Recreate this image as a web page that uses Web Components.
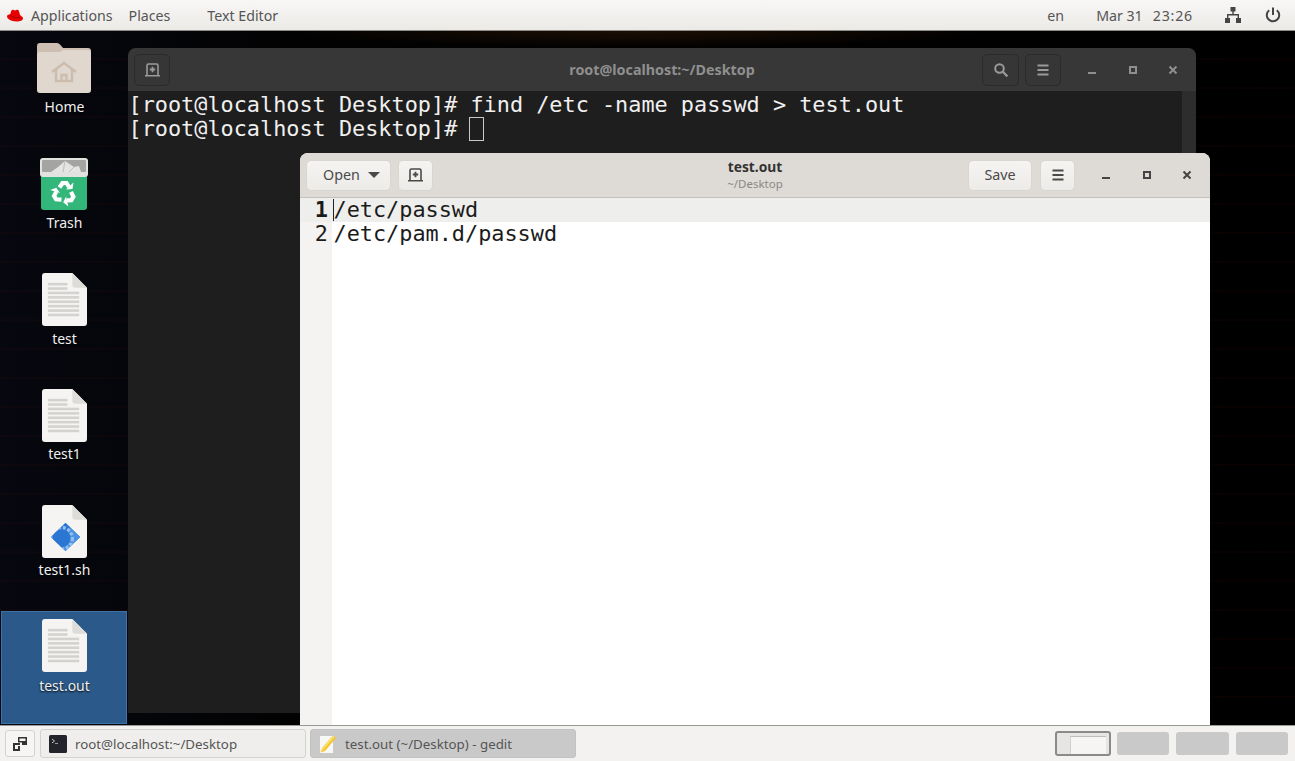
<!DOCTYPE html>
<html lang="en">
<head>
<meta charset="utf-8">
<title>Desktop</title>
<style>
  html, body { margin: 0; height: 100%; }
  body {
    width: 1295px;
    height: 761px;
    overflow: hidden;
    display: flex;
    flex-direction: column;
    font-family: "Noto Sans", "Open Sans", sans-serif;
    background: #000;
  }
</style>
</head>
<body>
<top-panel></top-panel>
<desktop-area>
  <desktop-icon kind="folder" label="Home"></desktop-icon>
  <desktop-icon kind="trash" label="Trash"></desktop-icon>
  <desktop-icon kind="text" label="test"></desktop-icon>
  <desktop-icon kind="text" label="test1"></desktop-icon>
  <desktop-icon kind="script" label="test1.sh"></desktop-icon>
  <desktop-icon kind="text" label="test.out" selected></desktop-icon>
  <terminal-window slot="windows"></terminal-window>
  <gedit-window slot="windows"></gedit-window>
</desktop-area>
<bottom-panel></bottom-panel>

<script>
const ICONS = {
  tab: `<svg width="17" height="16" viewBox="0 0 16 16" fill="none" stroke="currentColor"><path d="M2.500 13V3.500a1.500 1.500 0 0 1 1.500-1.500h8a1.500 1.500 0 0 1 1.500 1.500V13" stroke-width="1.600"/><path d="M.5 13.700h15" stroke-width="1.600"/><path d="M8 4.800v5.400M5.300 7.500h5.400" stroke-width="1.800"/></svg>`,
  menu: `<svg width="16" height="16" viewBox="0 0 16 16" fill="currentColor"><rect x="2.500" y="2.500" width="11" height="2"/><rect x="2.500" y="7" width="11" height="2"/><rect x="2.500" y="11.500" width="11" height="2"/></svg>`,
  search: `<svg width="16" height="16" viewBox="0 0 16 16" fill="none" stroke="currentColor"><circle cx="6.500" cy="6.500" r="4.300" stroke-width="2"/><path d="M9.800 9.800l4.600 4.600" stroke-width="2.200"/></svg>`,
  min: `<svg width="16" height="16" viewBox="0 0 16 16" fill="currentColor"><rect x="4" y="10" width="8" height="2"/></svg>`,
  max: `<svg width="16" height="16" viewBox="0 0 16 16" fill="none" stroke="currentColor" stroke-width="2"><rect x="5" y="5" width="6" height="6"/></svg>`,
  close: `<svg width="16" height="16" viewBox="0 0 16 16" fill="none" stroke="currentColor" stroke-width="2"><path d="M4.500 4.500l7 7M11.500 4.500l-7 7"/></svg>`
};

function svgFile(inner) {
  return `<svg width="45" height="53" viewBox="0 0 46 54">
    <path d="M3 0h28l15 15v36a3 3 0 0 1-3 3H3a3 3 0 0 1-3-3V3a3 3 0 0 1 3-3z" fill="#f5f4f2"/>
    <path d="M31 0l15 15H34a3 3 0 0 1-3-3z" fill="#dddcd8"/>
    ${inner}
  </svg>`;
}

const textLines = [10, 14.5, 19, 23.5, 28, 32.5, 37, 41.5]
  .map((y, i) => `<rect x="6" y="${y}" width="${i < 2 ? 20 : 32}" height="2.600" fill="#d3d2cf"/>`).join("");

const recycleArm = `<path d="M20.500 30.500l3-4.500h4l2.500 4" fill="none" stroke="#fff" stroke-width="4.200"/><path d="M27 32.500l6.500-.5 1-6.500z" fill="#fff"/>`;

const DESKTOP_ART = {
  folder: `<svg width="54" height="50" viewBox="0 0 54 50">
    <path d="M3 0h17a4 4 0 0 1 3 1.500L26 5h25a3 3 0 0 1 3 3v10H0V3a3 3 0 0 1 3-3z" fill="#cdbfb1"/>
    <path d="M0 12a3 3 0 0 1 3-3h20l3-2h25a3 3 0 0 1 3 3v37a3 3 0 0 1-3 3H3a3 3 0 0 1-3-3z" fill="#e0d8cf"/>
    <path d="M15 29l12-9 12 9M19 27v11h16V27M24.500 38v-6h5v6" fill="none" stroke="#cbbcae" stroke-width="2.400"/>
  </svg>`,
  trash: `<svg width="50" height="54" viewBox="0 0 50 54">
    <rect x="2" y="16" width="46" height="37" rx="3" fill="#33b679"/>
    <rect x="1" y="1" width="48" height="19" rx="3" fill="#e2e2e0"/>
    <rect x="3" y="3" width="44" height="12" rx="1" fill="#a4a4a2"/>
    <path d="M12 15l7-5 7-6 9 6 5-1 2 6z" fill="#e4e4e2"/>
    <path d="M26 4l-2 11M35 10l-5 5" stroke="#bdbdbb" stroke-width="1" fill="none"/>
    <g>${recycleArm}</g>
    <g transform="rotate(120 25 36)">${recycleArm}</g>
    <g transform="rotate(240 25 36)">${recycleArm}</g>
  </svg>`,
  text: svgFile(textLines),
  script: svgFile(`<defs><clipPath id="dia"><path d="M24 18l15 14.500L24 47 9 32.500z"/></clipPath></defs>
    <g clip-path="url(#dia)">
      <rect x="8" y="17" width="32" height="31" fill="#2a76d2"/>
      <path d="M24 18l16 15-16 15-6-6 12-22z" fill="#4b90e2"/>
      <circle cx="20" cy="34" r="11" fill="none" stroke="#93bfee" stroke-width="3.400" stroke-dasharray="3 1.800"/>
      <circle cx="20" cy="34" r="9" fill="#2a76d2"/>
    </g>`)
};

class TopPanel extends HTMLElement {
  constructor() {
    super();
    this.attachShadow({ mode: "open" }).innerHTML = `
      <style>
        :host {
          display: flex;
          align-items: center;
          flex: none;
          height: 30px;
          border-bottom: 1px solid #8e8c89;
          background: linear-gradient(#f8f7f6, #eceae7);
          color: #555;
          font-size: 14.2px;
        }
        svg { flex: none; }
        .hat { margin-left: 7px; margin-right: 8px; }
        .places { margin-left: 16px; }
        .app { margin-left: 37px; }
        .spacer { flex: 1; }
        .date { margin-left: 32px; }
        .time { margin-left: 10px; letter-spacing: .8px; }
        .net { margin-left: 32px; }
        .power { margin-left: 24px; margin-right: 14px; color: #444; }
      </style>
      <svg class="hat" width="16" height="13" viewBox="0 0 16 13">
        <path d="M10.500.8c-.9 0-1.600.6-2.500.6S6.500.8 5.500.8C4.200.8 3.800 3 3.300 5.200 1.500 5.300 0 6 0 7.500 0 9.600 4 12.500 9.500 12.500 13 12.500 16 11.300 16 9.200 16 7.700 13.300 7.200 12.700 5 12.200 2.800 11.700.8 10.500.8z" fill="#e60000"/>
        <path d="M3.300 5.500c0 1.500 4 3.500 9.700 3.200" fill="none" stroke="#8f0000" stroke-width=".7"/>
      </svg>
      <span>Applications</span>
      <span class="places">Places</span>
      <span class="app">Text Editor</span>
      <span class="spacer"></span>
      <span>en</span>
      <span class="date">Mar 31</span>
      <span class="time">23:26</span>
      <svg class="net" width="16" height="16" viewBox="0 0 16 16" fill="#444"><rect x="5.500" y="0" width="5" height="4.500"/><rect x="0" y="11" width="5" height="5"/><rect x="11" y="11" width="5" height="5"/><path d="M7.300 4h1.400v3H14v4h-1.400V8.400H3.400V11H2V7h5.300z"/></svg>
      <svg class="power" width="16" height="16" viewBox="0 0 16 16" fill="none" stroke="currentColor" stroke-width="2"><path d="M8 .5v7.500"/><path d="M4.200 3.200a6.200 6.200 0 1 0 7.600 0"/></svg>
    `;
  }
}

class DesktopArea extends HTMLElement {
  constructor() {
    super();
    this.attachShadow({ mode: "open" }).innerHTML = `
      <style>
        :host {
          display: block;
          position: relative;
          flex: 1;
          overflow: hidden;
          background:
            radial-gradient(ellipse 360px 16px at 640px 0, rgba(90,45,10,.3), transparent),
            repeating-linear-gradient(180deg, transparent 0 27px, rgba(60,10,5,.12) 27px 29px),
            linear-gradient(90deg, #07080f 0, #05060b 120px, #020202 300px, #000 100%);
        }
        .icons {
          display: grid;
          grid-auto-rows: 115.8px;
          width: 126px;
          padding-left: 1px;
        }
      </style>
      <div class="icons"><slot></slot></div>
      <slot name="windows"></slot>
    `;
  }
}

class DesktopIcon extends HTMLElement {
  constructor() {
    super();
    const kind = this.getAttribute("kind");
    const label = this.getAttribute("label");
    this.attachShadow({ mode: "open" }).innerHTML = `
      <style>
        :host {
          display: flex;
          flex-direction: column;
          align-items: center;
          box-sizing: border-box;
          padding-top: 10px;
          color: #f0f0f0;
          font-size: 14px;
          line-height: 20px;
          text-shadow: 0 1px 2px #000;
        }
        :host([selected]) {
          margin-top: 1px;
          padding-top: 8px;
          height: 113px;
          background: #2b5a8a;
          outline: 1px solid #3d71a8;
          outline-offset: -1px;
        }
        .art { height: 54px; display: flex; align-items: center; }
        .label { margin-top: 2px; padding-left: 1px; }
        :host([selected]) .label { margin-top: 3px; }
      </style>
      <div class="art">${DESKTOP_ART[kind]}</div>
      <div class="label">${label}</div>
    `;
  }
}

class HeaderButton extends HTMLElement {
  constructor() {
    super();
    this.attachShadow({ mode: "open" }).innerHTML = `
      <style>
        :host {
          display: inline-flex;
          align-items: center;
          justify-content: center;
          box-sizing: border-box;
          height: var(--btn-h, 31px);
          border-radius: 5px;
          background: var(--btn-bg);
          border: 1px solid var(--btn-border);
          color: var(--btn-fg);
          font-size: 14.3px;
        }
      </style>
      <slot></slot>
    `;
  }
}

class TerminalWindow extends HTMLElement {
  constructor() {
    super();
    this.attachShadow({ mode: "open" }).innerHTML = `
      <style>
        :host {
          position: absolute;
          left: 128px;
          top: 17px;
          width: 1068px;
          height: 665px;
          display: flex;
          flex-direction: column;
          border-radius: 8px 8px 0 0;
          overflow: hidden;
          background: #1e1e1e;
          --btn-bg: #363636;
          --btn-border: #2b2b2b;
          --btn-fg: #9a9a9a;
        }
        header {
          flex: none;
          height: 43px;
          display: grid;
          grid-template-columns: 1fr auto 1fr;
          align-items: center;
          background: #373737;
          color: #8f8f8f;
          font-size: 14.3px;
          font-weight: 700;
        }
        .start { padding-left: 6px; }
        .end { display: flex; align-items: center; justify-content: flex-end; }
        header-button { width: 36px; --btn-h: 32px; }
        .search { width: 37px; margin-right: 6px; }
        .controls { display: flex; gap: 24.5px; padding: 0 15px 0 23px; }
        .body { flex: 1; display: flex; min-height: 0; }
        pre {
          flex: 1;
          margin: 0;
          padding: 2px 0 0 .5px;
          font: 21.85px/24px "DejaVu Sans Mono", monospace;
          color: #f0f0f0;
        }
        .cursor {
          display: inline-block;
          box-sizing: border-box;
          width: 15px;
          height: 24px;
          margin-left: -1px;
          border: 1px solid #c8c8c8;
          vertical-align: top;
        }
        .scroll { flex: none; width: 14px; background: #2d2d2d; }
      </style>
      <header>
        <div class="start"><header-button>${ICONS.tab}</header-button></div>
        <span class="title">root@localhost:~/Desktop</span>
        <div class="end">
          <header-button class="search">${ICONS.search}</header-button>
          <header-button>${ICONS.menu}</header-button>
          <div class="controls">${ICONS.min}${ICONS.max}${ICONS.close}</div>
        </div>
      </header>
      <div class="body">
<pre>[root@localhost Desktop]# find /etc -name passwd &gt; test.out
[root@localhost Desktop]# <span class="cursor"></span></pre>
        <div class="scroll"></div>
      </div>
    `;
  }
}

class GeditWindow extends HTMLElement {
  constructor() {
    super();
    this.attachShadow({ mode: "open" }).innerHTML = `
      <style>
        :host {
          position: absolute;
          left: 300px;
          top: 122px;
          width: 910px;
          height: 572px;
          display: flex;
          flex-direction: column;
          border-radius: 8px 8px 0 0;
          overflow: hidden;
          background: #fff;
          --btn-bg: linear-gradient(#f5f4f2, #ecebe8);
          --btn-border: #d9d6d1;
          --btn-fg: #4a4a4a;
        }
        header {
          flex: none;
          box-sizing: border-box;
          height: 45px;
          display: grid;
          grid-template-columns: 1fr auto 1fr;
          align-items: center;
          background: #dedbd6;
          border-bottom: 1px solid #c6c2bb;
          color: #333;
        }
        .start, .end { display: flex; align-items: center; }
        .start { padding-left: 6px; }
        .end { justify-content: flex-end; }
        .open { width: 85px; gap: 8px; padding: 0 0 2px 6px; }
        .open i { width: 0; height: 0; margin-top: 2px; border: 6px solid transparent; border-top: 6px solid #4a4a4a; border-bottom: 0; }
        .newtab { width: 35px; margin-left: 7px; }
        .title { text-align: center; line-height: 17px; }
        .title b { display: block; font-size: 13.8px; color: #333; }
        .title small { display: block; font-size: 11.5px; color: #8a8884; }
        .save { width: 64px; margin-right: 8px; padding-bottom: 2px; }
        .menu { width: 35px; }
        .controls { display: flex; gap: 24.5px; padding: 0 15px 0 23px; color: #444; }
        .editor {
          flex: 1;
          display: grid;
          grid-template-columns: 32px 1fr;
          grid-template-rows: 24px 24px 1fr;
          font: 21.85px/24px "DejaVu Sans Mono", monospace;
          color: #1b1b1b;
        }
        .no { background: #f4f3f1; text-align: right; padding-right: 4px; box-sizing: border-box; }
        .no.cur { font-weight: 700; background: #eeeeec; }
        .ln { padding-left: 1.5px; white-space: pre; position: relative; }
        .ln.cur { background: #eeeeec; }
        .ln.cur::before { content: ""; position: absolute; left: 1px; top: 1px; bottom: 1px; width: 1px; background: #222; }
        .fill { background: #f4f3f1; }
      </style>
      <header>
        <div class="start">
          <header-button class="open">Open<i></i></header-button>
          <header-button class="newtab">${ICONS.tab}</header-button>
        </div>
        <div class="title"><b>test.out</b><small>~/Desktop</small></div>
        <div class="end">
          <header-button class="save">Save</header-button>
          <header-button class="menu">${ICONS.menu}</header-button>
          <div class="controls">${ICONS.min}${ICONS.max}${ICONS.close}</div>
        </div>
      </header>
      <div class="editor">
        <div class="no cur">1</div><div class="ln cur">/etc/passwd</div>
        <div class="no">2</div><div class="ln">/etc/pam.d/passwd</div>
        <div class="fill"></div><div></div>
      </div>
    `;
  }
}

class TaskButton extends HTMLElement {
  constructor() {
    super();
    this.attachShadow({ mode: "open" }).innerHTML = `
      <style>
        :host {
          display: flex;
          align-items: center;
          gap: 8px;
          box-sizing: border-box;
          width: 266px;
          height: 29px;
          padding-left: 8px;
          border: 1px solid #d4d2cf;
          border-radius: 3px;
          background: #efeeec;
          color: #555;
          font-size: 13.3px;
        }
        :host([active]) { background: #c9c9c9; border-color: #c2c2c2; }
        svg { flex: none; }
      </style>
      <slot name="icon"></slot><slot></slot>
    `;
  }
}

class BottomPanel extends HTMLElement {
  constructor() {
    super();
    this.attachShadow({ mode: "open" }).innerHTML = `
      <style>
        :host {
          display: flex;
          align-items: center;
          flex: none;
          box-sizing: border-box;
          height: 36px;
          border-top: 1px solid #9a9996;
          padding: 0 7px 0 5px;
          background: #f3f2f0;
        }
        .show {
          display: flex;
          align-items: center;
          justify-content: center;
          box-sizing: border-box;
          width: 30px;
          height: 27px;
          margin-right: 5px;
          border: 1px solid #d4d2cf;
          border-radius: 3px;
          background: #f6f5f4;
        }
        task-button + task-button { margin-left: 4px; }
        .spacer { flex: 1; }
        .ws { display: flex; gap: 7px; align-items: center; }
        .ws div { box-sizing: border-box; width: 52.5px; height: 23px; border-radius: 3px; background: #c9c9c9; }
        .ws .on {
          width: 56px;
          height: 25px;
          margin-right: -1px;
          background: #e6e5e3;
          border: 2px solid #8a8a8a;
          display: flex;
          justify-content: flex-end;
          align-items: flex-end;
          padding-right: 3px;
        }
        .ws .on span { width: 36px; height: 18px; background: #f6f5f3; border-top: 1px solid #bdbdbd; border-left: 1px solid #d0d0d0; box-sizing: border-box; }
      </style>
      <div class="show">
        <svg width="16" height="16" viewBox="0 0 16 16" fill="#333"><path d="M6 1h9v8h-5V6.500H6zM7.500 2.500v2.500h6V2.500z" fill-rule="evenodd"/><path d="M1 7h7v2H3v4h3v-3h2v5H1z"/></svg>
      </div>
      <task-button>
        <svg slot="icon" width="18" height="18" viewBox="0 0 18 18"><rect width="18" height="18" rx="1.500" fill="#23232b"/><path d="M3 4l2.500 2L3 8" fill="none" stroke="#ddd" stroke-width=".9"/><path d="M6 8.500h3" stroke="#aaa" stroke-width=".9"/></svg>
        root@localhost:~/Desktop
      </task-button>
      <task-button active>
        <svg slot="icon" width="18" height="20" viewBox="0 0 18 20"><path d="M1 2h13v17H1z" fill="#f8f8f8"/><path d="M14 1.500l3 2.500L6 17l-4.500 1.500L3 14z" fill="#f5c52e"/><path d="M14 1.500l1.500 1.200L4 16l-2.500 2.500L3 14z" fill="#fadf76"/></svg>
        test.out (~/Desktop) - gedit
      </task-button>
      <span class="spacer"></span>
      <div class="ws"><div class="on"><span></span></div><div></div><div></div><div></div></div>
    `;
  }
}

customElements.define("top-panel", TopPanel);
customElements.define("desktop-area", DesktopArea);
customElements.define("desktop-icon", DesktopIcon);
customElements.define("header-button", HeaderButton);
customElements.define("terminal-window", TerminalWindow);
customElements.define("gedit-window", GeditWindow);
customElements.define("task-button", TaskButton);
customElements.define("bottom-panel", BottomPanel);
</script>
</body>
</html>
